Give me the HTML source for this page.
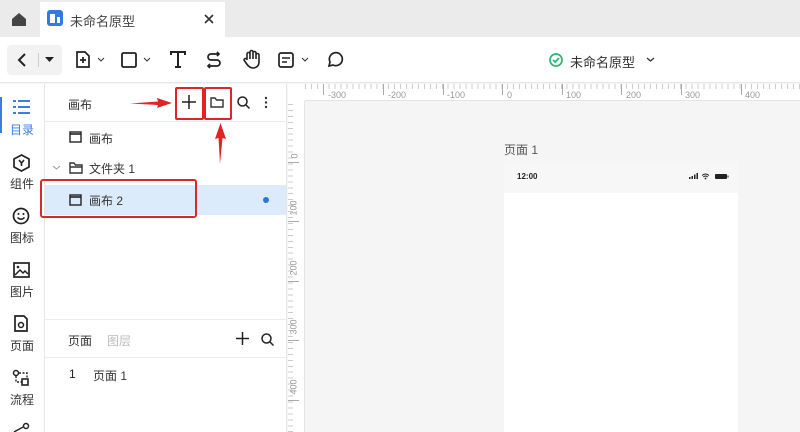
<!DOCTYPE html>
<html><head><meta charset="utf-8"><style>
*{margin:0;padding:0;box-sizing:border-box}
body{width:800px;height:432px;overflow:hidden;background:#f5f5f5;font-family:"Liberation Sans","Noto Sans CJK SC",sans-serif;position:relative;color:#333}
.a{position:absolute}
.t{font-size:12px;color:#333}
svg{position:absolute;overflow:visible}
</style></head><body>
<!-- tab bar -->
<div class="a" style="left:0;top:0;width:800px;height:37px;background:#ebebeb"></div>
<div class="a" style="left:40px;top:2px;width:185px;height:35px;background:#fff"></div>
<svg style="left:11px;top:12px" width="16" height="14"><path d="M1 7 L8 1 L15 7 V14 H1Z" fill="#444"/></svg>
<div class="a" style="left:47px;top:10px;width:16px;height:16px;background:#2f7be6;border-radius:3px"></div>
<div class="a" style="left:50px;top:14px;width:5px;height:9px;background:#fff"></div>
<div class="a" style="left:57px;top:17px;width:3px;height:6px;background:#fff"></div>
<div class="a t" style="left:70px;top:11px;font-size:13px;color:#444">未命名原型</div>
<svg style="left:204px;top:14px" width="10" height="10"><path d="M1 1L9 9M9 1L1 9" stroke="#333" stroke-width="1.6"/></svg>
<!-- toolbar -->
<div class="a" style="left:0;top:37px;width:800px;height:46px;background:#fff;border-bottom:1px solid #e6e6e6"></div>
<div class="a" style="left:7px;top:45px;width:55px;height:30px;background:#f2f2f2;border-radius:4px"></div>
<svg style="left:17px;top:53px" width="10" height="14"><path d="M8 1L2 7L8 13" stroke="#222" stroke-width="2" fill="none"/></svg>
<div class="a" style="left:38px;top:53px;width:1px;height:14px;background:#ccc"></div>
<svg style="left:45px;top:57px" width="10" height="6"><path d="M0 0H9L4.5 5Z" fill="#222"/></svg>
<svg style="left:75px;top:51px" width="16" height="17"><path d="M2 1H10L14 5V16H2Z" stroke="#222" stroke-width="1.7" fill="none"/><path d="M8 6V12M5 9H11" stroke="#222" stroke-width="1.7"/></svg>
<svg style="left:98px;top:58px" width="6" height="4"><path d="M0 0L3 3L6 0" stroke="#333" fill="none"/></svg>
<svg style="left:121px;top:52px" width="16" height="16"><rect x="1" y="1" width="14" height="14" rx="1.5" stroke="#222" stroke-width="1.8" fill="none"/></svg>
<svg style="left:144px;top:58px" width="6" height="4"><path d="M0 0L3 3L6 0" stroke="#333" fill="none"/></svg>
<svg style="left:170px;top:51px" width="16" height="17"><path d="M1 4V1H15V4M8 1V16M5 16H11" stroke="#222" stroke-width="2" fill="none"/></svg>
<svg style="left:206px;top:51px" width="16" height="17"><path d="M13 3H5A3 3 0 0 0 5 9H11A3 3 0 0 1 11 15H2M11 1L13 3L11 5M4 13L2 15L4 17" stroke="#222" stroke-width="1.7" fill="none"/></svg>
<svg style="left:243px;top:49px" width="18" height="20"><path d="M4 11V5a1.5 1.5 0 0 1 3 0V10V3a1.5 1.5 0 0 1 3 0V10V4a1.5 1.5 0 0 1 3 0V10V6a1.5 1.5 0 0 1 3 0V13C16 17 13 19 10 19C7 19 5 17 3 14L1 11a1.4 1.4 0 0 1 3 0" stroke="#222" stroke-width="1.6" fill="none"/></svg>
<svg style="left:278px;top:52px" width="16" height="16"><rect x="1" y="1" width="14" height="14" rx="2" stroke="#222" stroke-width="1.7" fill="none"/><path d="M4 6H12M4 10H9" stroke="#222" stroke-width="1.6"/></svg>
<svg style="left:302px;top:58px" width="6" height="4"><path d="M0 0L3 3L6 0" stroke="#333" fill="none"/></svg>
<svg style="left:326px;top:51px" width="17" height="17"><path d="M3 15L4 11A6.5 6.5 0 1 1 7 14Z" stroke="#222" stroke-width="1.7" fill="none"/></svg>
<svg style="left:549px;top:53px" width="14" height="14"><circle cx="7" cy="7" r="6" stroke="#2bb673" stroke-width="1.7" fill="none"/><path d="M4 7L6.2 9L10 5" stroke="#2bb673" stroke-width="1.7" fill="none"/></svg>
<div class="a" style="left:570px;top:52px;font-size:13px;color:#333">未命名原型</div>
<svg style="left:647px;top:58px" width="7" height="4"><path d="M0 0L3.5 3L7 0" stroke="#333" stroke-width="1.3" fill="none"/></svg>
<!-- left rail -->
<div class="a" style="left:0;top:84px;width:45px;height:348px;background:#fff;border-right:1px solid #e6e6e6"></div>
<div class="a" style="left:0;top:97px;width:2px;height:36px;background:#3b7de0"></div>
<svg style="left:13px;top:100px" width="17" height="14"><g fill="#3b7de0"><rect x="0" y="0" width="3" height="2"/><rect x="5" y="0" width="12" height="2"/><rect x="0" y="6" width="3" height="2"/><rect x="5" y="6" width="12" height="2"/><rect x="0" y="12" width="3" height="2"/><rect x="5" y="12" width="12" height="2"/></g></svg>
<div class="a" style="left:10px;top:121px;font-size:12px;color:#3b7de0">目录</div>
<svg style="left:13px;top:154px" width="17" height="18"><path d="M8.5 1L16 5V13L8.5 17L1 13V5Z" stroke="#222" stroke-width="1.7" fill="none"/><path d="M6 6L8.5 9L11 6M8.5 9V12" stroke="#222" stroke-width="1.6" fill="none"/></svg>
<div class="a t" style="left:10px;top:175px">组件</div>
<svg style="left:12px;top:207px" width="18" height="18"><circle cx="9" cy="9" r="7.5" stroke="#222" stroke-width="1.7" fill="none"/><circle cx="6.5" cy="7" r="1" fill="#222"/><circle cx="11.5" cy="7" r="1" fill="#222"/><path d="M5.5 10.5Q9 14 12.5 10.5" stroke="#222" stroke-width="1.5" fill="none"/></svg>
<div class="a t" style="left:10px;top:229px">图标</div>
<svg style="left:13px;top:262px" width="17" height="16"><rect x="1" y="1" width="15" height="14" stroke="#222" stroke-width="1.7" fill="none"/><circle cx="5" cy="5" r="1.3" fill="#222"/><path d="M2 13L7 8L10 11L12 9L15 12" stroke="#222" stroke-width="1.5" fill="none"/></svg>
<div class="a t" style="left:10px;top:283px">图片</div>
<svg style="left:13px;top:315px" width="16" height="17"><path d="M2 1H11L14 4V16H2Z" stroke="#222" stroke-width="1.7" fill="none"/><circle cx="8" cy="10" r="2.5" stroke="#222" stroke-width="1.5" fill="none"/></svg>
<div class="a t" style="left:10px;top:337px">页面</div>
<svg style="left:12px;top:369px" width="18" height="18"><circle cx="4" cy="4" r="2.5" stroke="#222" stroke-width="1.5" fill="none"/><rect x="10" y="10" width="6" height="6" stroke="#222" stroke-width="1.6" fill="none"/><path d="M4 7V13H10M7 4H15V9" stroke="#222" stroke-width="1.4" fill="none" stroke-dasharray="2 1.5"/></svg>
<div class="a t" style="left:10px;top:391px">流程</div>
<svg style="left:13px;top:422px" width="18" height="10"><circle cx="13" cy="4" r="2.5" stroke="#222" stroke-width="1.5" fill="none"/><path d="M1 10L10 5" stroke="#222" stroke-width="1.5"/></svg>
<!-- panel -->
<div class="a" style="left:45px;top:84px;width:242px;height:348px;background:#fff;border-right:1px solid #e6e6e6"></div>
<div class="a" style="left:45px;top:121px;width:242px;height:1px;background:#ececec"></div>
<div class="a t" style="left:68px;top:96px">画布</div>
<svg style="left:182px;top:95px" width="14" height="14"><path d="M7 0V14M0 7H14" stroke="#222" stroke-width="1.5"/></svg>
<svg style="left:210px;top:97px" width="14" height="11"><path d="M1 1H5L6.5 3H13V10H1Z" stroke="#333" stroke-width="1.4" fill="none"/></svg>
<svg style="left:237px;top:96px" width="13" height="13"><circle cx="5.5" cy="5.5" r="4.5" stroke="#222" stroke-width="1.5" fill="none"/><path d="M9 9L12.5 12.5" stroke="#222" stroke-width="1.5"/></svg>
<svg style="left:264px;top:96px" width="4" height="13"><circle cx="2" cy="2" r="1.2" fill="#333"/><circle cx="2" cy="6.5" r="1.2" fill="#333"/><circle cx="2" cy="11" r="1.2" fill="#333"/></svg>
<svg style="left:69px;top:131px" width="13" height="12"><rect x="1" y="1" width="11" height="10" stroke="#222" stroke-width="1.4" fill="none"/><path d="M1 3H12" stroke="#222" stroke-width="1.6"/></svg>
<div class="a t" style="left:89px;top:130px">画布</div>
<svg style="left:53px;top:166px" width="7" height="4"><path d="M0 0L3.5 3L7 0" stroke="#999" fill="none"/></svg>
<svg style="left:69px;top:162px" width="14" height="12"><path d="M1 1H5L6.5 3H13V11H1Z M1 5H13" stroke="#333" stroke-width="1.4" fill="none"/></svg>
<div class="a t" style="left:89px;top:160px">文件夹 1</div>
<div class="a" style="left:45px;top:185px;width:241px;height:30px;background:#dcebfc"></div>
<svg style="left:69px;top:194px" width="13" height="12"><rect x="1" y="1" width="11" height="10" stroke="#222" stroke-width="1.4" fill="none"/><path d="M1 3H12" stroke="#222" stroke-width="1.6"/></svg>
<div class="a t" style="left:89px;top:192px">画布 2</div>
<div class="a" style="left:263px;top:197px;width:6px;height:6px;border-radius:50%;background:#2a74de"></div>
<div class="a" style="left:45px;top:319px;width:242px;height:1px;background:#ececec"></div>
<div class="a" style="left:45px;top:357px;width:242px;height:1px;background:#ececec"></div>
<div class="a t" style="left:68px;top:332px">页面</div>
<div class="a t" style="left:107px;top:332px;color:#bbb">图层</div>
<svg style="left:236px;top:332px" width="13" height="13"><path d="M6.5 0V13M0 6.5H13" stroke="#222" stroke-width="1.5"/></svg>
<svg style="left:261px;top:333px" width="13" height="13"><circle cx="5.5" cy="5.5" r="4.5" stroke="#222" stroke-width="1.5" fill="none"/><path d="M9 9L12.5 12.5" stroke="#222" stroke-width="1.5"/></svg>
<div class="a t" style="left:69px;top:367px;color:#222">1</div>
<div class="a t" style="left:93px;top:367px">页面 1</div>
<!-- rulers -->
<div class="a" style="left:288px;top:84px;width:512px;height:17px;background:#fff;border-bottom:1px solid #e3e3e3;background-image:repeating-linear-gradient(90deg,#ccc 0 1px,transparent 1px 5.95px);background-size:100% 5px;background-repeat:no-repeat;background-position:11px 0"></div>
<div class="a" style="left:288px;top:101px;width:17px;height:331px;background:#fff;border-right:1px solid #e3e3e3;background-image:repeating-linear-gradient(180deg,#ccc 0 1px,transparent 1px 5.95px);background-size:5px 100%;background-repeat:no-repeat;background-position:0 3px"></div>
<div class="a" style="left:288px;top:84px;width:17px;height:17px;background:#fff"></div>
<div class="a" style="left:0;top:0;font-size:9px;color:#999">
<div class="a" style="left:323px;top:84px;width:1px;height:11px;background:#aaa"></div><div class="a" style="left:328px;top:90px">-300</div>
<div class="a" style="left:383px;top:84px;width:1px;height:11px;background:#aaa"></div><div class="a" style="left:388px;top:90px">-200</div>
<div class="a" style="left:443px;top:84px;width:1px;height:11px;background:#aaa"></div><div class="a" style="left:447px;top:90px">-100</div>
<div class="a" style="left:502px;top:84px;width:1px;height:11px;background:#aaa"></div><div class="a" style="left:507px;top:90px">0</div>
<div class="a" style="left:562px;top:84px;width:1px;height:11px;background:#aaa"></div><div class="a" style="left:566px;top:90px">100</div>
<div class="a" style="left:621px;top:84px;width:1px;height:11px;background:#aaa"></div><div class="a" style="left:626px;top:90px">200</div>
<div class="a" style="left:681px;top:84px;width:1px;height:11px;background:#aaa"></div><div class="a" style="left:685px;top:90px">300</div>
<div class="a" style="left:741px;top:84px;width:1px;height:11px;background:#aaa"></div><div class="a" style="left:745px;top:90px">400</div>
<div class="a" style="left:288px;top:162px;width:11px;height:1px;background:#aaa"></div><div class="a" style="left:292px;top:151px;transform:rotate(-90deg)">0</div>
<div class="a" style="left:288px;top:221px;width:11px;height:1px;background:#aaa"></div><div class="a" style="left:286px;top:203px;transform:rotate(-90deg)">100</div>
<div class="a" style="left:288px;top:281px;width:11px;height:1px;background:#aaa"></div><div class="a" style="left:286px;top:263px;transform:rotate(-90deg)">200</div>
<div class="a" style="left:288px;top:340px;width:11px;height:1px;background:#aaa"></div><div class="a" style="left:286px;top:322px;transform:rotate(-90deg)">300</div>
<div class="a" style="left:288px;top:400px;width:11px;height:1px;background:#aaa"></div><div class="a" style="left:286px;top:382px;transform:rotate(-90deg)">400</div>
</div>
<!-- artboard -->
<div class="a" style="left:504px;top:141px;font-size:12px;color:#555">页面 1</div>
<div class="a" style="left:504px;top:161px;width:234px;height:271px;background:#fff"></div>
<div class="a" style="left:504px;top:161px;width:234px;height:32px;background:#f7f7f7"></div>
<div class="a" style="left:517px;top:172px;font-size:8px;font-weight:bold;color:#222">12:00</div>
<svg style="left:689px;top:173px" width="42" height="7"><rect x="0" y="4" width="1.5" height="2" fill="#222"/><rect x="2.5" y="3" width="1.5" height="3" fill="#222"/><rect x="5" y="1.5" width="1.5" height="4.5" fill="#222"/><rect x="7.5" y="0" width="1.5" height="6" fill="#222"/><path d="M13 2.5Q16.5 -0.5 20 2.5M14.3 4Q16.5 2 18.7 4" stroke="#222" stroke-width="1" fill="none"/><circle cx="16.5" cy="5.5" r="0.9" fill="#222"/><rect x="26" y="1" width="12" height="5" rx="1" fill="#222"/><rect x="38.5" y="2.5" width="1" height="2" fill="#222"/></svg>
<!-- annotations -->
<div class="a" style="left:175px;top:87px;width:29px;height:33px;border:2px solid #e02424;border-radius:2px"></div>
<div class="a" style="left:204px;top:87px;width:28px;height:33px;border:2px solid #e02424;border-radius:2px"></div>
<div class="a" style="left:40px;top:179px;width:157px;height:39px;border:2px solid #d92a2a;border-radius:3px"></div>
<svg style="left:0;top:0" width="800" height="432"><path d="M130 103.5L158 101.5L157 98L172 103L157 108L158 105Z" fill="#e02424"/><path d="M220 164L218.5 138L215 139L220.5 123L226 139L222.5 138Z" fill="#e02424"/></svg>
</body></html>
